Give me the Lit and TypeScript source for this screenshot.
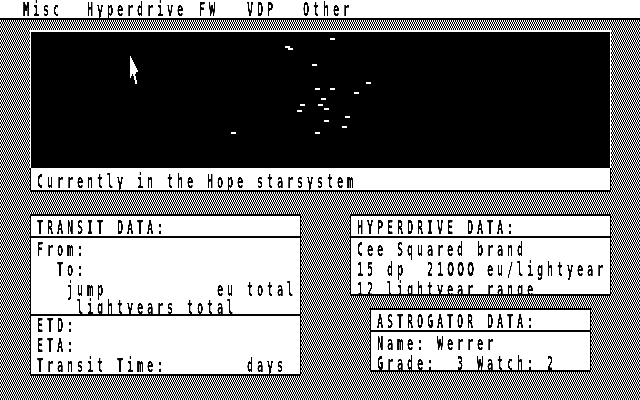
import { LitElement, html, css, svg } from "lit";
import { customElement, property } from "lit/decorators.js";

/* A line of terminal text set on a 10px character pitch. */
@customElement("text-line")
class TextLine extends LitElement {
  @property() text = "";
  static styles = css`
    :host {
      display: block;
      height: 20px;
    }
    .glyphs {
      display: block;
      width: max-content;
      height: 20px;
      white-space: pre;
      font: bold 19px/20px "DejaVu Sans Mono", "Liberation Mono", monospace;
      letter-spacing: 7.08px;
      transform: scaleX(0.54);
      transform-origin: 0 0;
      color: #000;
    }
    /* The proportional face has a plain zero, without an inner stroke. */
    .zero {
      font-family: "DejaVu Sans", sans-serif;
      letter-spacing: 5.3px;
    }
  `;
  render() {
    const runs = this.text.split(/(0+)/);
    return html`<span class="glyphs">${runs.map((run) =>
      run.startsWith("0") ? html`<span class="zero">${run}</span>` : run
    )}</span>`;
  }
}

const STARS: [number, number][] = [
  [330, 38], [285, 46], [288, 48], [312, 64], [366, 82], [315, 88],
  [330, 88], [354, 92], [321, 98], [300, 104], [318, 104], [297, 110],
  [324, 108], [345, 116], [324, 120], [342, 126], [231, 132], [315, 132],
];

/* Pointer rows, each two pixels tall: [x, row, width]. */
const POINTER: [number, number, number][] = [
  [0, 0, 1], [0, 1, 2], [0, 2, 3], [0, 3, 4], [0, 4, 5], [0, 5, 6],
  [0, 6, 7], [0, 7, 8], [0, 8, 6], [0, 9, 2], [3, 9, 2], [0, 10, 1],
  [4, 10, 2], [4, 11, 2], [5, 12, 2], [5, 13, 2],
];

@customElement("star-map")
class StarMap extends LitElement {
  static styles = css`
    :host {
      display: block;
      box-sizing: border-box;
      height: 138px;
      background: #000;
      border: 1px solid #fff;
      border-width: 2px 1px 0;
    }
    svg {
      display: block;
      width: 579px;
      height: 136px;
      fill: #fff;
      shape-rendering: crispEdges;
    }
  `;
  render() {
    return html`<svg viewBox="31 32 579 136">
      ${STARS.map(([x, y]) => svg`<rect x=${x} y=${y} width="5" height="2" />`)}
      <g transform="translate(130 56)">
        ${POINTER.map(([x, r, w]) => svg`<rect x=${x} y=${r * 2} width=${w} height="2" />`)}
      </g>
    </svg>`;
  }
}

@customElement("app-root")
class AppRoot extends LitElement {
  static styles = css`
    :host {
      display: block;
      box-sizing: border-box;
      width: 640px;
      height: 400px;
      overflow: hidden;
      background: conic-gradient(#000 25%, #fff 0 50%, #000 0 75%, #fff 0) 0 0 / 2px 4px;
    }
    .menu {
      display: flex;
      box-sizing: border-box;
      height: 20px;
      padding-left: 23px;
      background: #fff;
      border-bottom: 2px solid #000;
      overflow: hidden;
      filter: contrast(6);
    }
    .menu text-line {
      margin-top: -1px;
      flex: none;
    }
    .misc { width: 64px; }
    .hyper { width: 112px; }
    .fw { width: 48px; }
    .vdp { width: 56px; }
    .view {
      width: 581px;
      margin: 10px 0 0 30px;
    }
    .box {
      box-sizing: border-box;
      background: #fff;
      border: 1px solid #000;
      border-width: 2px 1px;
      overflow: hidden;
      filter: contrast(6);
    }
    .box text-line {
      margin-left: 6px;
    }
    .status {
      height: 24px;
      border-top-width: 0;
      padding-top: 3px;
    }
    .panels {
      display: flex;
      justify-content: space-between;
      width: 581px;
      margin: 22px 0 0 30px;
    }
    .right {
      display: flex;
      flex-direction: column;
      align-items: center;
      gap: 12px;
      width: 261px;
    }
    .title {
      box-sizing: border-box;
      height: 22px;
      padding-top: 1px;
      border-bottom: 2px solid #000;
    }
    .transit { width: 271px; height: 162px; }
    .hyperdrive { width: 261px; height: 82px; }
    .astrogator { width: 221px; height: 64px; }
    .body { padding-top: 1px; }
    .route {
      box-sizing: border-box;
      height: 78px;
      padding-top: 1px;
      border-bottom: 2px solid #000;
      overflow: hidden;
    }
    .route .tight { height: 18px; }
    .times { margin-top: -1px; }
  `;
  render() {
    return html`
      <div class="menu">
        <text-line class="misc" text="Misc"></text-line>
        <text-line class="hyper" text="Hyperdrive"></text-line>
        <text-line class="fw" text="FW"></text-line>
        <text-line class="vdp" text="VDP"></text-line>
        <text-line text="Other"></text-line>
      </div>
      <div class="view">
        <star-map></star-map>
        <div class="box status">
          <text-line text="Currently in the Hope starsystem"></text-line>
        </div>
      </div>
      <div class="panels">
        <div class="box transit">
          <div class="title"><text-line text="TRANSIT DATA:"></text-line></div>
          <div class="route">
            <text-line text="From:"></text-line>
            <text-line text="  To:"></text-line>
            <text-line class="tight" text="   jump           eu total"></text-line>
            <text-line class="tight" text="    lightyears total"></text-line>
          </div>
          <div class="times">
            <text-line text="ETD:"></text-line>
            <text-line text="ETA:"></text-line>
            <text-line text="Transit Time:        days"></text-line>
          </div>
        </div>
        <div class="right">
          <div class="box hyperdrive">
            <div class="title"><text-line text="HYPERDRIVE DATA:"></text-line></div>
            <div class="body">
              <text-line text="Cee Squared brand"></text-line>
              <text-line text="15 dp  21000 eu/lightyear"></text-line>
              <text-line text="12 lightyear range"></text-line>
            </div>
          </div>
          <div class="box astrogator">
            <div class="title"><text-line text="ASTROGATOR DATA:"></text-line></div>
            <div class="body">
              <text-line text="Name: Werrer"></text-line>
              <text-line text="Grade:  3 Watch: 2"></text-line>
            </div>
          </div>
        </div>
      </div>
    `;
  }
}
